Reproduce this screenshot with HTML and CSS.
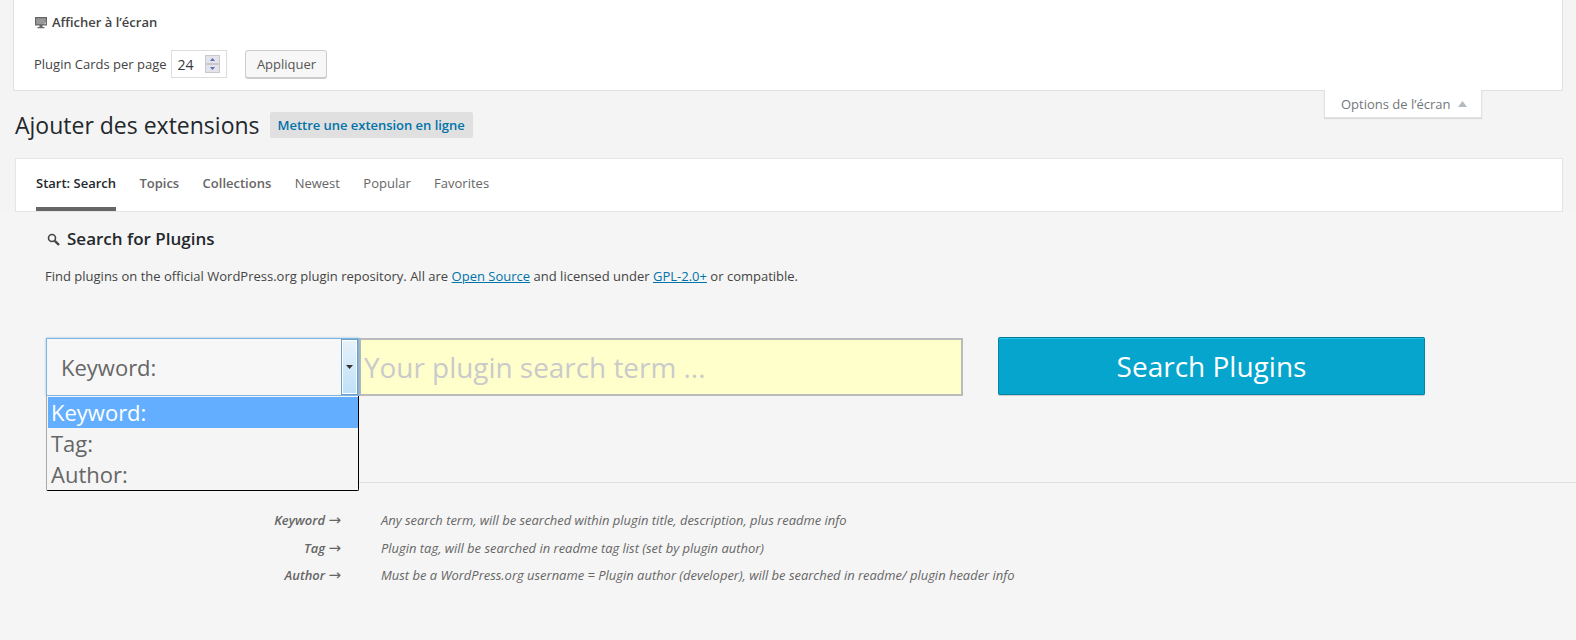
FILE: index.html
```html
<!DOCTYPE html>
<html lang="fr">
<head>
<meta charset="utf-8">
<title>Ajouter des extensions</title>
<link rel="stylesheet" href="styles.css">
</head>
<body>
<div class="wrap">
  <section class="screen-panel">
    <h5 class="screen-title">
      <svg class="monitor" width="12" height="12" viewBox="0 0 12 12"><path fill="#666" d="M0 0h12v8.500H0zM4.500 8.500h3V10h2v1.200H2.500V10h2z"/><path fill="#999" d="M1.200 1.200h9.600V5L8.700 7.200H1.200z"/><path fill="#d8d8d8" d="M10.800 5v2.200H8.700z"/></svg>
      Afficher à l’écran
    </h5>
    <div class="screen-fields">
      <label class="per-page">Plugin Cards per page</label>
      <div class="num-input">
        <span>24</span>
        <span class="spinner">
          <span class="spin-btn"><svg width="5" height="3" viewBox="0 0 5 3"><path fill="#5a6fb5" d="M2.500 0 5 3H0z"/></svg></span>
          <span class="spin-btn"><svg width="5" height="3" viewBox="0 0 5 3"><path fill="#5a6fb5" d="M0 0h5L2.500 3z"/></svg></span>
        </span>
      </div>
      <button class="apply" type="button">Appliquer</button>
    </div>
    <button class="screen-tab" type="button">Options de l’écran <svg width="9" height="6" viewBox="0 0 9 6"><path fill="#b4b9be" d="M4.500 0 9 6H0z"/></svg></button>
  </section>

  <header class="page-head">
    <h1>Ajouter des extensions</h1>
    <a class="upload" href="#">Mettre une extension en ligne</a>
  </header>

  <nav class="filter-card">
    <a class="tab current" href="#">Start: Search</a>
    <a class="tab semi" href="#">Topics</a>
    <a class="tab semi" href="#">Collections</a>
    <a class="tab" href="#">Newest</a>
    <a class="tab" href="#">Popular</a>
    <a class="tab" href="#">Favorites</a>
  </nav>

  <main class="search-area">
    <h3 class="search-title">
      <svg width="13" height="13" viewBox="0 0 13 13"><circle cx="5" cy="5" r="3.500" fill="none" stroke="#444" stroke-width="1.600"/><path d="M7.800 7.800 12 12" stroke="#444" stroke-width="2.400"/></svg>
      Search for Plugins
    </h3>
    <p class="intro">Find plugins on the official WordPress.org plugin repository. All are <a href="#">Open Source</a> and licensed under <a href="#">GPL-2.0+</a> or compatible.</p>

    <div class="search-row">
      <div class="select-wrap">
        <div class="select-box">
          <span class="select-value">Keyword:</span>
          <span class="select-arrow"><svg width="7" height="4" viewBox="0 0 7 4"><path fill="#333" d="M0 0h7L3.500 4z"/></svg></span>
        </div>
        <ul class="select-list">
          <li class="selected">Keyword:</li>
          <li>Tag:</li>
          <li>Author:</li>
        </ul>
      </div>
      <div class="term">Your plugin search term ...</div>
      <button class="go" type="button">Search Plugins</button>
    </div>

    <hr class="rule">

    <dl class="legend">
      <div class="legend-row"><dt>Keyword <span class="arrow">→</span></dt><dd>Any search term, will be searched within plugin title, description, plus readme info</dd></div>
      <div class="legend-row"><dt>Tag <span class="arrow">→</span></dt><dd>Plugin tag, will be searched in readme tag list (set by plugin author)</dd></div>
      <div class="legend-row"><dt>Author <span class="arrow">→</span></dt><dd>Must be a WordPress.org username = Plugin author (developer), will be searched in readme/ plugin header info</dd></div>
    </dl>
  </main>
</div>
</body>
</html>
```

FILE: styles.css
```css
* { box-sizing: border-box; }
html, body { margin: 0; padding: 0; }
body {
  background: #f4f4f4;
  font-family: "Open Sans", sans-serif;
  font-size: 13px;
  color: #444;
  height: 640px;
  overflow: hidden;
}
.wrap { padding-right: 13px; }
a { color: #0073aa; }

.screen-panel {
  position: relative;
  margin-left: 13px;
  height: 91px;
  background: #fff;
  border: 1px solid #e1e1e1;
  border-top: 0;
  padding: 13px 20px 0;
}
.screen-title {
  margin: 0;
  display: flex;
  align-items: center;
  gap: 5px;
  padding-left: 1px;
  font-size: 13px;
  font-weight: 600;
  line-height: 18px;
  color: #444;
}
.monitor { margin-top: 1px; }
.screen-fields {
  display: flex;
  align-items: center;
  margin-top: 19px;
}
.per-page { line-height: 28px; }
.num-input {
  display: flex;
  align-items: center;
  justify-content: space-between;
  width: 56px;
  height: 28px;
  margin-left: 4px;
  padding: 0 7px 0 6px;
  border: 1px solid #ddd;
  font-size: 14px;
  color: #32373c;
}
.spinner {
  display: flex;
  flex-direction: column;
  gap: 1px;
}
.spin-btn {
  display: flex;
  align-items: center;
  justify-content: center;
  width: 13px;
  height: 7px;
  background: #e3e3e9;
  box-shadow: 0 0 0 1px #c8c8d0;
}
.spin-btn + .spin-btn { margin-top: 1px; }
.apply {
  margin-left: 18px;
  width: 82px;
  height: 28px;
  padding: 0 0 0 2px;
  font: 13px "Open Sans", sans-serif;
  color: #555;
  background: #f7f7f7;
  border: 1px solid #ccc;
  border-radius: 3px;
  box-shadow: 0 1px 0 #ccc;
}
.screen-tab {
  position: absolute;
  top: 90px;
  right: 80px;
  width: 158px;
  height: 28px;
  display: flex;
  align-items: center;
  gap: 7px;
  padding: 0 0 0 16px;
  background: #fff;
  border: 1px solid #e1e1e1;
  border-top: 0;
  box-shadow: 0 1px 1px rgba(0,0,0,.1);
  font: 13px "Open Sans", sans-serif;
  color: #72777c;
}
.page-head {
  display: flex;
  align-items: center;
  margin-left: 15px;
  margin-top: 21px;
  height: 26px;
}
.page-head h1 {
  margin: 0;
  font-size: 23px;
  font-weight: 400;
  line-height: 26px;
  color: #23282d;
}
.upload {
  margin-left: 10px;
  height: 26px;
  padding: 0 8px;
  line-height: 26px;
  border-radius: 2px;
  background: #e0e0e0;
  font-weight: 600;
  text-decoration: none;
  letter-spacing: -.03px;
}

.filter-card {
  display: flex;
  gap: 23.400px;
  margin: 20px 0 0 15px;
  height: 54px;
  padding-left: 20px;
  background: #fff;
  border: 1px solid #e5e5e5;
  box-shadow: 0 1px 1px rgba(0,0,0,.04);
}
.tab {
  height: 52px;
  line-height: 48px;
  color: #666;
  text-decoration: none;
}
.tab.semi { font-weight: 600; }
.tab.current {
  font-weight: 600;
  color: #23282d;
  border-bottom: 4px solid #666;
}

.search-area {
  margin-right: -13px;
  padding: 16px 0 0 45px;
  background: #f5f5f5;
  height: 429px;
}
.search-title {
  margin: 0;
  display: flex;
  align-items: center;
  gap: 7px;
  padding-left: 2px;
  font-size: 17px;
  font-weight: 600;
  line-height: 22px;
  color: #23282d;
}
.intro {
  margin: 16px 0 0;
  line-height: 20px;
  color: #444;
  word-spacing: .04px;
}
.search-row {
  display: flex;
  align-items: flex-start;
  margin: 52px 0 0 1px;
}
.select-wrap {
  position: relative;
  width: 313px;
  height: 58px;
}
.select-box {
  display: flex;
  align-items: stretch;
  height: 58px;
  background: #f7f7f7;
  border: 1px solid #7db5e2;
  box-shadow: 0 0 2px rgba(80,150,220,.6);
}
.select-value {
  flex: 1;
  padding-left: 14px;
  line-height: 56px;
  font-size: 22px;
  color: #666;
}
.select-arrow {
  width: 17px;
  display: flex;
  align-items: center;
  justify-content: center;
  background: linear-gradient(#e6f2fb, #bfe0f6);
  border: 1px solid #6d9fc4;
  border-right-width: 2px;
  outline: 1px solid #fff;
  outline-offset: -2px;
}
.select-list {
  position: absolute;
  top: 58px;
  left: 0;
  right: 0;
  height: 95px;
  margin: 0;
  padding: 1px 0 0;
  list-style: none;
  background: #f5f5f5;
  border: 1px solid #000;
  border-left-color: #aaa;
  border-top: 0;
  border-radius: 0 0 2px 2px;
  font-size: 22px;
  line-height: 31px;
  color: #666;
}
.select-list li {
  padding-left: 4px;
  height: 31px;
}
.select-list .selected {
  margin-left: 1px;
  padding-left: 3px;
  background: #63aeff;
  color: #fff;
}
.term {
  width: 604px;
  height: 58px;
  padding-left: 3px;
  line-height: 54px;
  background: #ffc;
  border: 2px solid #bbb;
  font-size: 27.900px;
  color: #cacaca;
  white-space: nowrap;
}
.go {
  margin: -1px 0 0 35px;
  width: 427px;
  height: 58px;
  padding: 0;
  background: #06a5cd;
  border: 1px solid #0085a6;
  border-top-color: #007a99;
  border-radius: 2px;
  box-shadow: inset 0 1px 0 #1fc1e8, 0 1px 0 #ccc;
  font: 28px "Open Sans", sans-serif;
  color: #fff;
}
.rule {
  margin: 86px 0 0 0;
  height: 1px;
  border: 0;
  background: #e1e1e1;
}
.legend {
  margin: 27px 0 0;
  font-size: 12.950px;
  font-style: italic;
  color: #666;
}
.legend-row {
  display: flex;
  gap: 40px;
  height: 27.500px;
  line-height: 20px;
}
.legend-row dt {
  width: 296px;
  text-align: right;
  font-weight: 600;
}
.legend-row dd { margin: 0; }
.arrow {
  font-family: "DejaVu Sans", sans-serif;
  font-style: normal;
  font-weight: 400;
  font-size: 15px;
  line-height: 1;
}
```
